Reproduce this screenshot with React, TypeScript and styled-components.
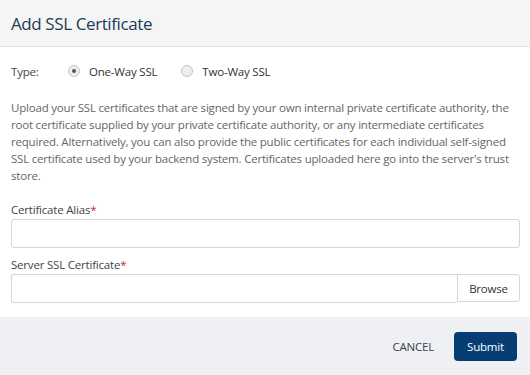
import React, { useState } from "react";
import styled, { createGlobalStyle } from "styled-components";

const GlobalStyle = createGlobalStyle`
  html, body {
    margin: 0;
    padding: 0;
    background: #ffffff;
  }

  body {
    font-family: "Open Sans", "Noto Sans", sans-serif;
    color: #444444;
  }
`;

const Dialog = styled.div`
  width: 530px;
  height: 375px;
  display: flex;
  flex-direction: column;
  background: #ffffff;
`;

const DialogHeader = styled.div`
  height: 46px;
  display: flex;
  align-items: center;
  padding: 0 11px;
  background: #f5f5f5;
  border-bottom: 1px solid #e3e3e3;
`;

const DialogTitle = styled.h1`
  margin: 0;
  font-size: 17px;
  font-weight: 400;
  color: #223b58;
  letter-spacing: -0.4px;
`;

const DialogBody = styled.div`
  flex: 1;
  padding: 14px 10px 0 11px;
`;

const TypeRow = styled.div`
  display: flex;
  align-items: center;
  height: 20px;
  font-size: 11.5px;
  letter-spacing: -0.2px;
`;

const TypeLabel = styled.span`
  width: 57px;
  color: #444444;
`;

const RadioOption = styled.label`
  display: flex;
  align-items: center;
  gap: 9px;
  margin-right: 24px;
  color: #333333;
  cursor: pointer;
`;

const RadioDot = styled.span<{ $checked: boolean }>`
  width: 10px;
  height: 10px;
  border-radius: 50%;
  border: 1px solid #c4c4c4;
  background: #eeeeee;
  display: flex;
  align-items: center;
  justify-content: center;

  &::after {
    content: "";
    width: 4px;
    height: 4px;
    border-radius: 50%;
    background: ${props => (props.$checked ? "#555555" : "transparent")};
  }
`;

const Description = styled.p`
  margin: 18px 0 0;
  font-size: 11.5px;
  line-height: 17px;
  color: #666666;
  letter-spacing: -0.2px;
`;

const Field = styled.div`
  margin-top: 17px;
  display: flex;
  flex-direction: column;

  & + & {
    margin-top: 8px;
  }
`;

const FieldLabel = styled.label`
  font-size: 11.5px;
  line-height: 17px;
  letter-spacing: -0.2px;
  color: #444444;
  margin-bottom: 1px;
`;

const Required = styled.span`
  color: #d9262b;
`;

const TextInput = styled.input`
  box-sizing: border-box;
  height: 29px;
  width: 100%;
  border: 1px solid #d6d6d6;
  border-radius: 3px;
  padding: 0 8px;
  font: inherit;
  font-size: 12px;
  outline: none;
`;

const FileRow = styled.div`
  display: flex;
  align-items: flex-start;
  height: 29px;
`;

const FileInput = styled(TextInput)`
  flex: 1;
  border-radius: 3px 0 0 3px;
  border-right: none;
`;

const BrowseButton = styled.button`
  box-sizing: border-box;
  width: 63px;
  height: 28px;
  border: 1px solid #d6d6d6;
  border-radius: 0 3px 3px 0;
  background: #ffffff;
  font-family: inherit;
  font-size: 11.5px;
  letter-spacing: -0.2px;
  color: #333333;
  cursor: pointer;
`;

const DialogFooter = styled.div`
  height: 58px;
  display: flex;
  align-items: center;
  justify-content: flex-end;
  gap: 20px;
  padding: 0 13px 0 0;
  background: #eef0f3;
`;

const CancelButton = styled.button`
  border: none;
  background: transparent;
  font-family: inherit;
  font-size: 11.5px;
  letter-spacing: -0.2px;
  color: #3a3f4f;
  cursor: pointer;
  padding: 0;
`;

const SubmitButton = styled.button`
  width: 63px;
  height: 29px;
  border: none;
  border-radius: 4px;
  background: #063e74;
  color: #ffffff;
  font-family: inherit;
  font-size: 11.5px;
  letter-spacing: -0.2px;
  cursor: pointer;
`;

const App = () => {
  const [ type, setType ] = useState<"one" | "two">("one");

  return (
    <>
      <GlobalStyle />
      <Dialog>
        <DialogHeader>
          <DialogTitle>Add SSL Certificate</DialogTitle>
        </DialogHeader>

        <DialogBody>
          <TypeRow>
            <TypeLabel>Type:</TypeLabel>
            <RadioOption onClick={ () => setType("one") }>
              <RadioDot $checked={ type === "one" } />
              One-Way SSL
            </RadioOption>
            <RadioOption onClick={ () => setType("two") }>
              <RadioDot $checked={ type === "two" } />
              Two-Way SSL
            </RadioOption>
          </TypeRow>

          <Description>
            Upload your SSL certificates that are signed by your own internal private certificate authority, the root certificate supplied by your private certificate authority, or any intermediate certificates required. Alternatively, you can also provide the public certificates for each individual self-signed SSL certificate used by your backend system. Certificates uploaded here go into the server's trust store.
          </Description>

          <Field>
            <FieldLabel>Certificate Alias<Required>*</Required></FieldLabel>
            <TextInput type="text" />
          </Field>

          <Field>
            <FieldLabel>Server SSL Certificate<Required>*</Required></FieldLabel>
            <FileRow>
              <FileInput type="text" readOnly />
              <BrowseButton>Browse</BrowseButton>
            </FileRow>
          </Field>
        </DialogBody>

        <DialogFooter>
          <CancelButton>CANCEL</CancelButton>
          <SubmitButton>Submit</SubmitButton>
        </DialogFooter>
      </Dialog>
    </>
  );
};

export default App;
